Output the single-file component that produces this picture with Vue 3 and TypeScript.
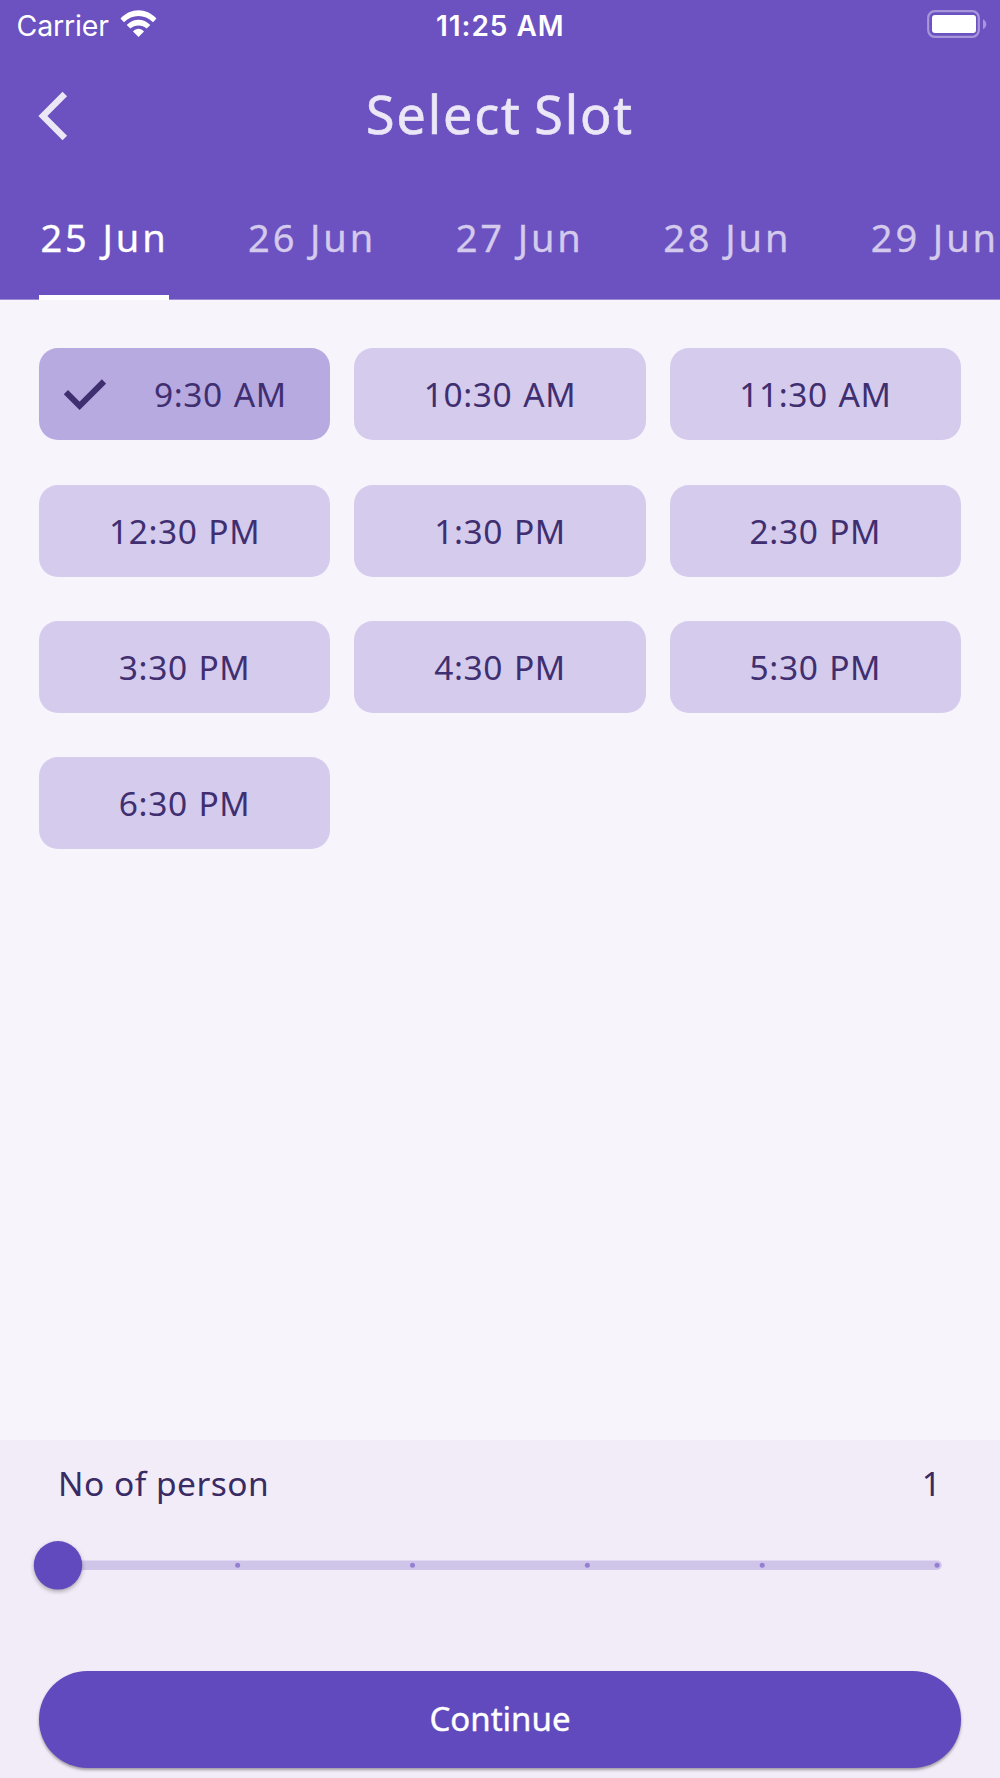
<script setup lang="ts">
import { ref } from 'vue'

const dates: string[] = ['25 Jun', '26 Jun', '27 Jun', '28 Jun', '29 Jun']
const slots: string[] = [
  '9:30 AM', '10:30 AM', '11:30 AM',
  '12:30 PM', '1:30 PM', '2:30 PM',
  '3:30 PM', '4:30 PM', '5:30 PM',
  '6:30 PM',
]
const activeDate = ref(0)
const activeSlot = ref(0)
const persons = ref(1)
</script>

<template>
  <div class="screen">
    <header class="header">
      <div class="status">
        <div class="carrier">
          <span class="carrier-name">Carrier</span>
          <svg class="wifi" width="38" height="28" viewBox="0 0 38 28" fill="#fff">
            <path d="M.5 8.6C10.8-2.4 26.2-2.4 36.5 8.6L33 12.2C24.6 3.9 12.4 3.9 4 12.2Z" />
            <path d="M6.7 15C13.6 8.1 23.4 8.1 30.3 15L26.7 18.6C22.1 14.4 14.9 14.4 10.3 18.6Z" />
            <path d="M13 21.4C16.3 18 20.7 18 24 21.4L18.5 27Z" />
          </svg>
        </div>
        <span class="clock">11:25 AM</span>
        <svg class="battery" width="60" height="28" viewBox="0 0 60 28">
          <rect x="1.2" y="1.2" width="50.6" height="25.6" rx="6.5" fill="none" stroke="#a797da" stroke-width="2.2" />
          <rect x="5" y="5" width="44" height="18" rx="3" fill="#fff" />
          <path d="M56 9.2Q59.3 11.2 59.3 14.2T56 19.2Z" fill="#a797da" />
        </svg>
      </div>
      <div class="titlebar">
        <svg class="back" width="30" height="50" viewBox="0 0 30 50">
          <path d="M26.8 2.9L4.9 25L26.8 47.1" fill="none" stroke="#ebe7f6" stroke-width="6.4" />
        </svg>
        <h1 class="title">Select Slot</h1>
      </div>
      <nav class="tabs">
        <div
          v-for="(date, i) in dates"
          :key="date"
          class="tab"
          :class="{ active: i === activeDate }"
          @click="activeDate = i"
        >{{ date }}</div>
      </nav>
    </header>

    <main class="slots">
      <div
        v-for="(slot, i) in slots"
        :key="slot"
        class="slot"
        :class="{ selected: i === activeSlot }"
        @click="activeSlot = i"
      >
        <svg v-if="i === activeSlot" class="check" width="42" height="31" viewBox="0 0 42 31">
          <path d="M1.9 13.2L15.6 26.8L40 2.4" fill="none" stroke="#402f70" stroke-width="6" />
        </svg>
        <span class="slot-label">{{ slot }}</span>
      </div>
    </main>

    <section class="panel">
      <div class="person-row">
        <span class="person-label">No of person</span>
        <span>{{ persons }}</span>
      </div>
      <svg class="slider" width="940" height="60" viewBox="0 0 940 60">
        <rect x="23" y="25.4" width="888.7" height="9.6" rx="4.8" fill="#cfc5e9" />
        <circle v-for="n in 5" :key="n" :cx="32.8 + n * 174.85" cy="30.3" r="2.5" fill="#947fd3" />
        <circle class="thumb" cx="28" cy="30.3" r="24.2" fill="#6149be" />
      </svg>
      <button class="continue"><span>Continue</span></button>
    </section>
  </div>
</template>

<style>
body {
  margin: 0;
  overflow: hidden;
}
</style>

<style scoped>
.screen {
  display: flex;
  flex-direction: column;
  width: 1000px;
  height: 1778px;
  overflow: hidden;
  background: #f7f4fc;
  color: #392b63;
  font-family: "Noto Sans", sans-serif;
}
.header {
  height: 300px;
  box-sizing: border-box;
  background: linear-gradient(#6c51c1 299px, #9f8bd6 299px);
  overflow: hidden;
}
.status {
  display: grid;
  grid-template-columns: 1fr auto 1fr;
  align-items: center;
  height: 50px;
  padding: 0 13px 0 16.5px;
  color: #fff;
  font-family: Inter, sans-serif;
  font-size: 28.5px;
}
.carrier {
  display: flex;
  align-items: center;
  gap: 11.5px;
}
.carrier-name {
  letter-spacing: -0.15px;
}
.wifi {
  margin-top: -2px;
}
.clock {
  padding: 2px 3px 0 0;
  font-weight: 600;
  font-size: 28px;
  letter-spacing: 0.95px;
}
.battery {
  justify-self: end;
  margin-top: -2px;
}
.titlebar {
  display: grid;
  grid-template-columns: 61px 1fr 61px;
  align-items: center;
  height: 132px;
  padding: 0 38px;
}
.title {
  margin: -4px 0 0;
  text-align: center;
  color: #ebe7f6;
  font-size: 52px;
  font-weight: 400;
  line-height: 70px;
  letter-spacing: 1.9px;
  word-spacing: -3px;
  -webkit-text-stroke: 0.6px #ebe7f6;
}
.tabs {
  display: flex;
  gap: 77.6px;
  height: 118px;
  padding-left: 39px;
}
.tab {
  flex: 0 0 130px;
  box-sizing: border-box;
  height: 118px;
  padding: 29px 0 0 1px;
  border-bottom: 5px solid transparent;
  color: #d3caec;
  font-size: 38px;
  line-height: 52px;
  letter-spacing: 2.9px;
  text-align: center;
  white-space: nowrap;
  -webkit-text-stroke: 0.3px currentColor;
}
.tab.active {
  color: #fff;
  border-bottom-color: #fff;
}
.slots {
  flex: 1;
  display: grid;
  grid-template-columns: repeat(3, 291.2px);
  grid-auto-rows: 92px;
  align-content: start;
  gap: 44.2px 24.2px;
  padding: 48.4px 39px 0;
}
.slot {
  display: flex;
  align-items: center;
  justify-content: center;
  border-radius: 19px;
  background: #d5cbed;
  color: #402f70;
  font-size: 33.5px;
  letter-spacing: 0.6px;
  word-spacing: 1.5px;
}
.slot.selected {
  justify-content: flex-start;
  padding-left: 25px;
  background: #b7aae1;
}
.selected .slot-label {
  margin-left: 48px;
}
.panel {
  height: 338px;
  box-sizing: border-box;
  background: #f2ecf8;
  padding: 20px 39px 0;
}
.person-row {
  display: flex;
  justify-content: space-between;
  padding: 0 20px 0 19px;
  font-size: 33.5px;
  line-height: 46px;
}
.person-label {
  letter-spacing: 0.5px;
}
.slider {
  display: block;
  margin: 29px 0 0 -9px;
}
.thumb {
  filter: drop-shadow(0 2px 2px rgba(0, 0, 0, 0.3));
}
.continue {
  display: block;
  width: 922px;
  height: 96.6px;
  margin: 76.4px 0 0;
  padding: 0 0 2px;
  border: 0;
  border-radius: 48.3px;
  background: #6149be;
  box-shadow: 0 2px 3px rgba(0, 0, 0, 0.35);
  color: #fff;
  font: 400 33px "Noto Sans", sans-serif;
  -webkit-text-stroke: 0.4px #fff;
}
</style>
